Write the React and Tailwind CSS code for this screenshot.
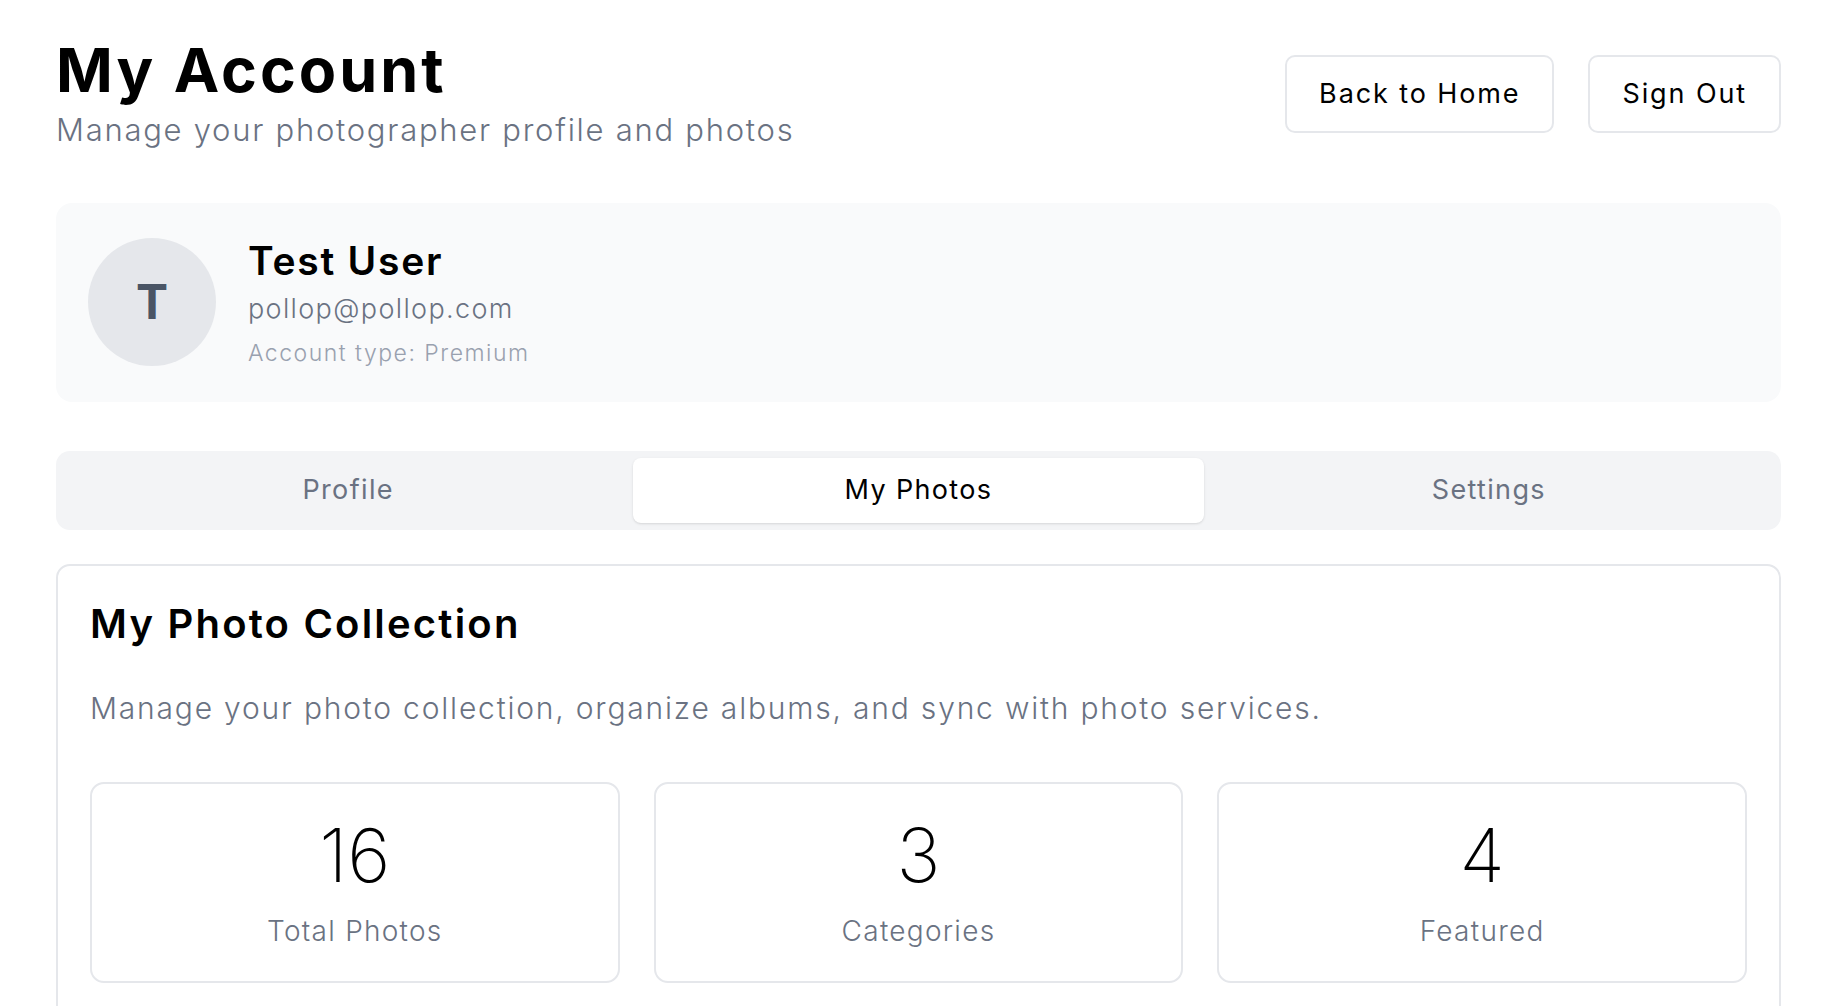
import React, { useState } from 'react';

const FONT = { fontFamily: 'Inter, "Noto Sans", sans-serif' };

const TABS = ['Profile', 'My Photos', 'Settings'];

const STATS = [
  { value: '16', label: 'Total Photos' },
  { value: '3', label: 'Categories' },
  { value: '4', label: 'Featured' },
];

export default function App() {
  const [tab, setTab] = useState('My Photos');

  return (
    <div className="min-h-screen bg-white text-black" style={FONT}>
      <div className="pl-[56px] pr-[53px] pt-[36px]">
        {/* header */}
        <div className="flex items-start justify-between">
          <div>
            <h1 className="text-[61px] font-bold leading-[68px] tracking-[0.05em]">My Account</h1>
            <p className="mt-[8px] text-[31px] font-light leading-[36px] text-gray-500 tracking-[0.056em]">
              Manage your photographer profile and photos
            </p>
          </div>
          <div className="mt-[19px] flex gap-[34px]">
            <button className="h-[78px] rounded-[10px] border-2 border-gray-200 bg-white px-[32px] text-[27px] tracking-[0.07em]">
              Back to Home
            </button>
            <button className="h-[78px] rounded-[10px] border-2 border-gray-200 bg-white px-[32px] text-[27px] tracking-[0.07em]">
              Sign Out
            </button>
          </div>
        </div>

        {/* profile card */}
        <div className="mt-[55px] flex items-start gap-[32px] rounded-[16px] bg-gray-50 px-[32px] py-[35px]">
          <div className="flex h-[128px] w-[128px] shrink-0 items-center justify-center rounded-full bg-gray-200 text-[48px] font-bold text-gray-600">
            T
          </div>
          <div className="mt-[1px]">
            <div className="text-[39px] font-semibold leading-[44px] tracking-[0.045em]">Test User</div>
            <div className="mt-[6px] text-[27px] font-light leading-[40px] text-gray-500 tracking-[0.05em]">pollop@pollop.com</div>
            <div className="mt-[10px] text-[23px] font-light leading-[28px] text-gray-400 tracking-[0.065em]">Account type: Premium</div>
          </div>
        </div>

        {/* tabs */}
        <div className="mt-[49px] grid grid-cols-3 rounded-[14px] bg-gray-100 p-[7px]">
          {TABS.map((t) => (
            <button
              key={t}
              onClick={() => setTab(t)}
              className={
                t === tab
                  ? 'h-[65px] rounded-[8px] bg-white text-[27px] font-normal tracking-[0.05em] text-black shadow-sm'
                  : 'h-[65px] rounded-[8px] text-[27px] font-normal tracking-[0.05em] text-gray-500'
              }
            >
              {t}
            </button>
          ))}
        </div>

        {/* collection card */}
        <div className="mt-[34px] rounded-[14px] border-2 border-gray-200 px-[32px] pt-[34px] pb-[40px]">
          <h2 className="text-[40px] font-semibold leading-[48px] tracking-[0.055em]">My Photo Collection</h2>
          <p className="mt-[40px] text-[30px] font-light leading-[40px] text-gray-500 tracking-[0.06em]">
            Manage your photo collection, organize albums, and sync with photo services.
          </p>
          <div className="mt-[54px] grid grid-cols-3 gap-[34px]">
            {STATS.map((s) => (
              <div key={s.label} className="flex h-[201px] flex-col items-center rounded-[14px] border-2 border-gray-200 pt-[31px]">
                <div className="text-[74px] font-extralight leading-[80px]">{s.value}</div>
                <div className="mt-[18px] text-[28px] font-light leading-[36px] text-gray-500 tracking-[0.045em]">{s.label}</div>
              </div>
            ))}
          </div>
        </div>
      </div>
    </div>
  );
}
